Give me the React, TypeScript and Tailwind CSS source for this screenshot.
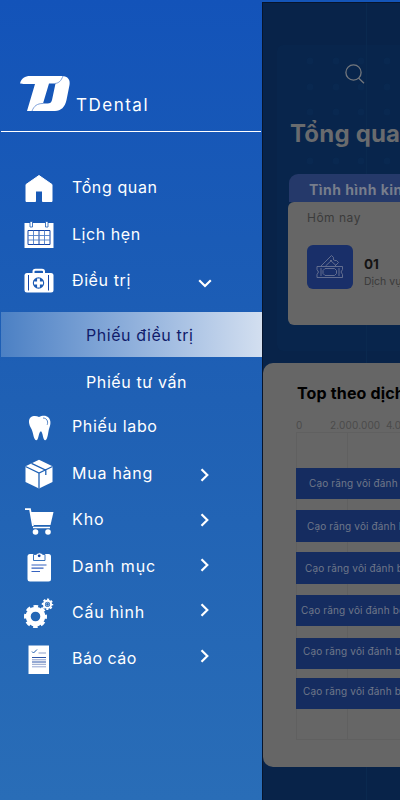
import type { ReactNode } from 'react'
import clsx from 'clsx'

/* ── Icons ───────────────────────────────────────────── */

function Logo() {
  return (
    <svg width="52" height="37" viewBox="0 0 52 37" fill="none">
      <path
        fillRule="evenodd"
        fill="#fff"
        d="M1 8.500C2.500 3 6 1 11 1H43C49 1 51.500 5 50.500 10L47.500 25C46 32 42 36 36 36H8L16 9H6C4 9 2 8.500 1 8.500ZM30 8.500L24 28.500H28.500C31 28.500 32.500 27.500 33 25L36.500 8.500Z"
      />
      <path d="M44 1C42 6 40 8 36 8.500M13 36C15 31 18 28.500 24 28.500" stroke="#5f8ad0" strokeWidth="0.800" />
    </svg>
  )
}

function HomeIcon() {
  return (
    <svg width="30" height="30" viewBox="0 0 30 30">
      <path
        fill="#fff"
        stroke="#fff"
        strokeLinejoin="round"
        d="M15 1.500L28 10.500V27.500H18.500V17H11.500V27.500H2V10.500Z"
      />
    </svg>
  )
}

function CalendarIcon() {
  return (
    <svg width="30" height="30" viewBox="0 0 30 30" fill="none">
      <path fill="#fff" d="M.5 3H29.500V28H.5Z" />
      <path fill="#fff" stroke="#1a5ab4" strokeWidth="0.800" d="M6 1.500H8.500V7H6ZM21.500 1.500H24V7H21.500Z" />
      <path stroke="#1546a8" strokeWidth="1" d="M4 10.500H26V24.500H4ZM15 10.500V24.500" />
      <path stroke="#4f7fc8" strokeWidth="0.900" d="M4 15.500H26M4 20H26M9.500 10.500V24.500M20.500 10.500V24.500" />
    </svg>
  )
}

function KitIcon() {
  return (
    <svg width="30" height="30" viewBox="0 0 30 30" fill="none">
      <path d="M9.500 7V5.500Q9.500 3.800 11.500 3.800H18Q20 3.800 20 5.500V7" stroke="#fff" strokeWidth="2" />
      <rect x="0.500" y="7" width="29" height="19.500" rx="2.500" fill="#fff" />
      <path d="M4.500 9V24.500M24.500 9V24.500" stroke="#1546a8" />
      <circle cx="14.500" cy="17" r="5.700" fill="#1a5ab4" />
      <path d="M14.500 12.500V21.500M10 17H19" stroke="#fff" strokeWidth="2.800" />
    </svg>
  )
}

function ToothIcon() {
  return (
    <svg width="30" height="30" viewBox="0 0 30 30" fill="none">
      <path
        fill="#fff"
        d="M15 4C18 2.500 22 2 24.500 4.500C27.500 8 26.500 12 25 16C24 19.500 23.800 26.500 21.300 27.300C18.800 27.500 19 19.500 17 18.300C14.500 18.500 15 26.500 12.500 27.300C9.500 27.300 9.500 20 7.500 16C4.800 11.500 4 7 6.500 4.500C9 2.500 12.500 2.800 15 4Z"
      />
      <path d="M19 5C22.500 5 24.500 8 23.200 11.800" stroke="#2b66b8" strokeWidth="0.800" />
    </svg>
  )
}

function BoxIcon() {
  return (
    <svg width="30" height="30" viewBox="0 0 30 30" fill="none">
      <path fill="#fff" d="M15 .8L28.500 7.300V23L15 29.500L1.500 23V7.300Z" />
      <path d="M1.500 7.500L15 14L28.500 7.500M15 14V29.500M7.500 4.300L21.800 11.200V16" stroke="#1f61b5" strokeWidth="1.300" />
    </svg>
  )
}

function CartIcon() {
  return (
    <svg width="30" height="30" viewBox="0 0 30 30" fill="none">
      <path d="M1 3.200H6L9 20" stroke="#fff" strokeWidth="1.800" />
      <path fill="#fff" d="M6.500 6H29.500L26.500 19H9.500Z" />
      <path d="M9 21.500H26" stroke="#fff" strokeWidth="1.500" />
      <circle cx="11.500" cy="26" r="2.800" fill="#fff" />
      <circle cx="24" cy="26" r="2.800" fill="#fff" />
    </svg>
  )
}

function ClipboardIcon() {
  return (
    <svg width="30" height="30" viewBox="0 0 30 30" fill="none">
      <rect x="3.500" y="2" width="23.500" height="27.500" rx="2.500" fill="#fff" />
      <path fill="#fff" stroke="#2464b5" strokeWidth="0.900" d="M9.500 2.500H12Q15.500 -1 19 2.500H21V8.500H9.500Z" />
      <circle cx="15.200" cy="3.800" r="1.400" fill="#1546a8" />
      <path d="M7.500 13H22.500M7.500 16.200H19.500M7.500 19.500H16" stroke="#3763c0" strokeWidth="1.200" />
    </svg>
  )
}

function GearsIcon() {
  return (
    <svg width="30" height="30" viewBox="0 0 30 30" fill="none">
      <circle cx="11.500" cy="18.500" r="7.300" stroke="#fff" strokeWidth="5" />
      <circle cx="11.500" cy="18.500" r="10.200" stroke="#fff" strokeWidth="2.600" strokeDasharray="4.610 3.400" strokeDashoffset="2.300" />
      <circle cx="23.500" cy="6.300" r="3.600" stroke="#fff" strokeWidth="2" />
      <circle cx="23.500" cy="6.300" r="5" stroke="#fff" strokeWidth="1.500" strokeDasharray="2.200 1.727" strokeDashoffset="1.100" />
      <circle cx="23.500" cy="6.300" r="1.600" stroke="#fff" strokeWidth="0.500" />
    </svg>
  )
}

function ReportIcon() {
  return (
    <svg width="30" height="30" viewBox="0 0 30 30" fill="none">
      <path fill="#fff" d="M4.500 .5H25V29H4.500Z" />
      <path d="M8 6.500L9.500 8L13 4.500" stroke="#1c5cb0" />
      <path d="M14.500 8H22M8 14.800H22M8 19.300H22" stroke="#8d9fc9" />
      <path d="M8 12.500H22M8 17H22" stroke="#2d55a8" />
      <path d="M8 21.700H22" stroke="#b4c0e0" strokeWidth="1.500" />
    </svg>
  )
}

function Chevron({ down }: { down?: boolean }) {
  return (
    <svg width="14" height="14" viewBox="0 0 14 14" fill="none" stroke="#fff" strokeWidth="2.200">
      <path d={down ? 'M1.200 4.300L7 10L12.800 4.300' : 'M3.500 1.200L9.300 7L3.500 12.800'} />
    </svg>
  )
}

function TicketIcon() {
  return (
    <svg width="28" height="26" viewBox="0 0 28 26" fill="none" stroke="#6b7593" strokeWidth="0.900">
      <path d="M1 12.500H26.500V15.500Q23.500 18 26.500 20.500V23.500H1V20.500Q4 18 1 15.500Z" />
      <path d="M9 14.500H18.500L20.500 16.500V19.500L18.500 21.500H9L7 19.500V16.500ZM5 14V22M23 14V22" />
      <path d="M5 12L15.500 1.500L17.500 3.500Q16.500 7 20.500 6.500L22.500 8.500L19 12M9.500 12L16 6M14 6L20 11.500" />
    </svg>
  )
}

/* ── Data ────────────────────────────────────────────── */

interface MenuItem {
  label: string
  icon: ReactNode
  textClass: string
  arrowClass?: string
  open?: boolean
}

const MAIN_ITEMS: MenuItem[] = [
  { label: 'Tổng quan', icon: <HomeIcon />, textClass: 'tracking-[0.6px]' },
  { label: 'Lịch hẹn', icon: <CalendarIcon />, textClass: 'tracking-[0.55px]' },
  { label: 'Điều trị', icon: <KitIcon />, textClass: 'tracking-[0.6px]', arrowClass: 'pt-[7px]', open: true },
]

const MORE_ITEMS: MenuItem[] = [
  { label: 'Phiếu labo', icon: <ToothIcon />, textClass: 'tracking-[0.65px]' },
  { label: 'Mua hàng', icon: <BoxIcon />, textClass: 'tracking-[0.75px]', arrowClass: 'pt-[4px]' },
  { label: 'Kho', icon: <CartIcon />, textClass: 'tracking-[0.9px]', arrowClass: 'pt-px' },
  { label: 'Danh mục', icon: <ClipboardIcon />, textClass: 'tracking-[0.95px]', arrowClass: 'pb-px' },
  { label: 'Cấu hình', icon: <GearsIcon />, textClass: 'tracking-[0.75px]', arrowClass: 'pb-[3px]' },
  { label: 'Báo cáo', icon: <ReportIcon />, textClass: 'tracking-[0.5px]', arrowClass: 'pb-1' },
]

const BARS = [
  'mt-[35px] h-[31px] pl-[13px]',
  'mt-[11px] h-[32px] pl-[11px]',
  'mt-[10px] h-[32px] pl-[9px]',
  'mt-[11px] h-[31px] pl-[5px]',
  'mt-[12px] h-[31px] pl-[7px] pb-1',
  'mt-[9px] h-[31px] pl-[7px] pb-1',
]

/* ── Sidebar ─────────────────────────────────────────── */

function MenuRow({ item }: { item: MenuItem }) {
  return (
    <div className="flex h-[46.400px] items-center pl-6 text-white">
      <span className="w-12 shrink-0 pt-[3px]">{item.icon}</span>
      <span className={clsx('w-[126px] text-[16px] leading-6 whitespace-nowrap', item.textClass)}>{item.label}</span>
      {item.arrowClass && (
        <span className={item.arrowClass}>
          <Chevron down={item.open} />
        </span>
      )}
    </div>
  )
}

function Sidebar() {
  return (
    <aside className="flex h-full w-[262px] shrink-0 flex-col bg-linear-to-b from-[#1353b9] via-[#1f60b4] to-[#296db7]">
      <div className="ml-px flex h-[132px] w-[260px] items-end border-b border-white pl-[18px]">
        <div className="pb-[19px]">
          <Logo />
        </div>
        <span className="pb-[14px] pl-[5px] text-[17px] leading-6 tracking-[1.500px] text-white">TDental</span>
      </div>

      <nav className="pt-[32px]">
        {MAIN_ITEMS.map((item) => (
          <MenuRow key={item.label} item={item} />
        ))}
        <div className="mt-[9px] ml-px flex h-[45px] items-center bg-linear-to-r from-[#4b80c4] to-[#d3dff0] pl-[85px] text-[16px] tracking-[0.55px] text-[#101c6b]">
          Phiếu điều trị
        </div>
        <div className="flex h-[46px] items-center pt-[3px] pl-[86px] text-[16px] tracking-[0.6px] text-white">
          Phiếu tư vấn
        </div>
        {MORE_ITEMS.map((item) => (
          <MenuRow key={item.label} item={item} />
        ))}
      </nav>
    </aside>
  )
}

/* ── Dimmed dashboard ────────────────────────────────── */

function Backdrop() {
  return (
    <svg className="absolute inset-0" width="138" height="798" viewBox="0 0 138 798">
      <rect x="14" y="42" width="140" height="306" rx="6" fill="#08254c" />
      {[58, 84, 109, 134, 158].map((y) =>
        [47, 73, 98, 124].map((x) => <circle key={`${x}-${y}`} cx={x} cy={y} r="3.500" fill="#092850" />),
      )}
      <path d="M103.500 0V798" stroke="#0a294f" />
    </svg>
  )
}

function Dashboard() {
  return (
    <main className="relative mt-[2px] h-[798px] w-[138px] overflow-hidden border-t border-l border-[#07152d] bg-[#082349] whitespace-nowrap">
      <Backdrop />
      <div className="relative flex flex-col">
        <div className="flex h-[114px] items-center pt-[27px] pl-[82px]">
          <svg width="20" height="20" viewBox="0 0 20 20" fill="none" stroke="#73777d" strokeWidth="1.300">
            <circle cx="8.500" cy="8.500" r="7.600" />
            <path d="M13.500 14L19 19.300" />
          </svg>
        </div>
        <h1 className="h-[57px] pl-[27px] text-[24px] leading-[34px] font-bold tracking-[0.2px] text-[#696b6e]">Tổng quan</h1>
        <div className="ml-[26px] h-[28px] rounded-tl-[9px] bg-[#25396a] pl-[20px] text-[14px] leading-[31px] font-bold tracking-[0.45px] text-[#777d8c]">
          Tình hình kinh doanh
        </div>
        <section className="ml-[25px] h-[123px] rounded-l-[6px] bg-[#666] pl-[19px]">
          <div className="h-[43px] pt-2 text-[12px] leading-4 tracking-[0.5px] text-[#3b3b3b]">Hôm nay</div>
          <div className="flex">
            <div className="flex h-[44px] w-[46px] shrink-0 items-center justify-center rounded-[6px] bg-[#192f69]">
              <TicketIcon />
            </div>
            <div className="pt-[10px] pl-[11px]">
              <div className="text-[13.500px] leading-[18px] font-bold text-[#141414]">01</div>
              <div className="text-[10.500px] leading-[17px] text-[#3a3a3a]">Dịch vụ</div>
            </div>
          </div>
        </section>

        <section className="mt-[38px] h-[404px] rounded-l-[10px] bg-[#666] pl-[33px]">
          <h2 className="pt-[19px] pl-px text-[16px] leading-[22px] font-bold tracking-[0.15px] text-black">Top theo dịch vụ</h2>
          <div className="mt-[14px] flex h-[14px] text-[10px] leading-[14px] text-[#4b4b4b]">
            <span className="w-[34px] shrink-0">0</span>
            <span className="w-[56px] shrink-0 tracking-[0.15px]">2.000.000</span>
            <span className="shrink-0">4.000.000</span>
          </div>
          <div className="relative h-[308px] border-y border-l border-[#606060]">
            <div className="absolute top-0 left-[50px] h-full w-px bg-[#606060]" />
            {BARS.map((bar) => (
              <div
                key={bar}
                className={clsx('relative -ml-px flex items-center bg-[#152c60] text-[10px] tracking-[0.15px] text-[#6f7789]', bar)}
              >
                Cạo răng vôi đánh bóng
              </div>
            ))}
          </div>
        </section>
      </div>
    </main>
  )
}

export default function App() {
  return (
    <div className="flex h-[800px] w-[400px] overflow-hidden bg-[#1455b8] font-['Inter','Open_Sans',sans-serif]">
      <Sidebar />
      <Dashboard />
    </div>
  )
}
